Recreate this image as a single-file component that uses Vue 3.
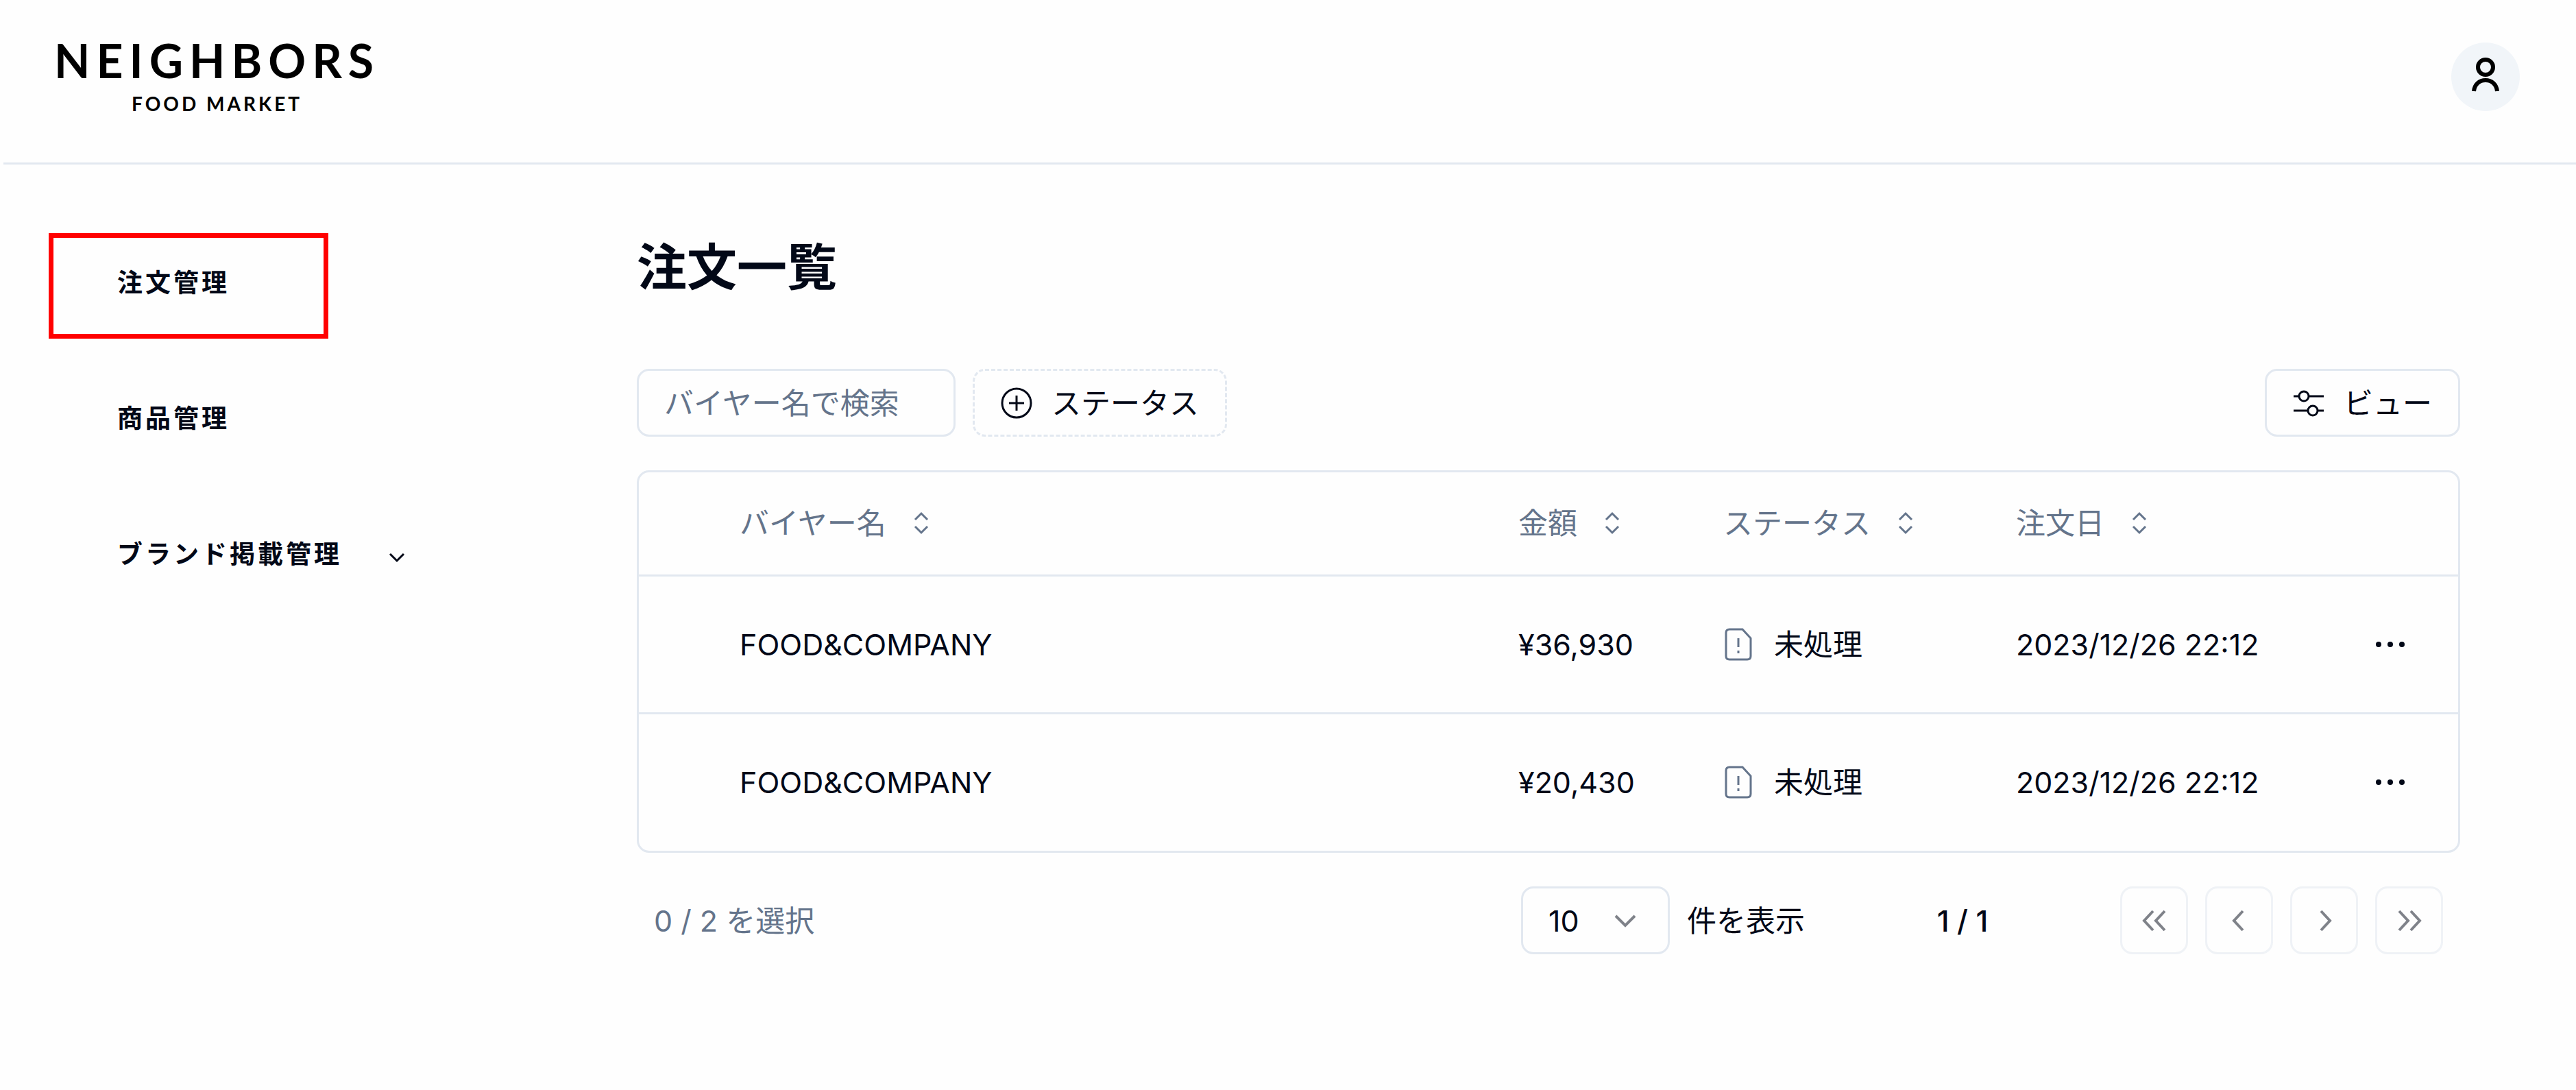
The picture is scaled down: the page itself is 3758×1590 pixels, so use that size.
<script setup>
import { ref } from 'vue'

const keyword = ref('')
const pageSize = ref('10')

const columns = [
  { key: 'buyer', label: 'バイヤー名' },
  { key: 'amount', label: '金額' },
  { key: 'status', label: 'ステータス' },
  { key: 'date', label: '注文日' }
]

const orders = [
  { id: 1, buyer: 'FOOD&COMPANY', amount: '¥36,930', status: '未処理', date: '2023/12/26 22:12' },
  { id: 2, buyer: 'FOOD&COMPANY', amount: '¥20,430', status: '未処理', date: '2023/12/26 22:12' }
]

const pagers = [
  { label: '最初のページ', d: 'M17 3L4 17L17 31M34 3L21 17L34 31' },
  { label: '前のページ', d: 'M24 3L11 17L24 31' },
  { label: '次のページ', d: 'M14 3L27 17L14 31' },
  { label: '最後のページ', d: 'M4 3L17 17L4 31M21 3L34 17L21 31' }
]
</script>

<template>
  <div class="page">
    <header class="header">
      <a class="logo" href="#">
        <span class="logo-name">NEIGHBORS</span>
        <span class="logo-sub">FOOD MARKET</span>
      </a>
      <button class="avatar" type="button" aria-label="アカウント">
        <svg width="100" height="100" viewBox="0 0 100 100" fill="none" stroke="#000" stroke-width="6">
          <circle cx="50" cy="36" r="11" />
          <path d="M33 71C34 61 41 55 50 55S66 61 67 71" />
        </svg>
      </button>
    </header>

    <div class="body">
      <nav class="sidebar">
        <a class="nav-item current" href="#">注文管理</a>
        <a class="nav-item" href="#">商品管理</a>
        <button class="nav-item" type="button">
          ブランド掲載管理
          <svg width="24" height="34" viewBox="0 0 24 34" fill="none" stroke="currentColor" stroke-width="3">
            <path d="M2 16L12 26L22 16" />
          </svg>
        </button>
      </nav>

      <main class="main">
        <h1 class="title">注文一覧</h1>

        <div class="toolbar">
          <input v-model="keyword" class="search" type="text" placeholder="バイヤー名で検索" aria-label="バイヤー名で検索" />
          <button class="btn dashed" type="button">
            <svg width="46" height="46" viewBox="0 0 46 46" fill="none" stroke="currentColor" stroke-width="3">
              <circle cx="23" cy="23" r="21" />
              <path d="M23 12V34M12 23H34" />
            </svg>
            ステータス
          </button>
          <button class="btn view" type="button">
            <svg width="46" height="46" viewBox="0 0 46 46" fill="none" stroke="currentColor" stroke-width="3">
              <path d="M1 13H9M23 13H45M1 34H22M36 34H45" />
              <circle cx="16" cy="13" r="7" />
              <circle cx="29" cy="34" r="7" />
            </svg>
            ビュー
          </button>
        </div>

        <div class="table-box">
          <table class="orders">
            <colgroup>
              <col class="col-select" />
              <col />
              <col class="col-amount" />
              <col class="col-status" />
              <col class="col-date" />
              <col class="col-actions" />
            </colgroup>
            <thead>
              <tr>
                <th></th>
                <th v-for="column in columns" :key="column.key" scope="col">
                  <button class="sort" type="button">
                    {{ column.label }}
                    <svg width="22" height="34" viewBox="0 0 22 34" fill="none" stroke="currentColor" stroke-width="3">
                      <path d="M2 12L11 3L20 12M2 22L11 31L20 22" />
                    </svg>
                  </button>
                </th>
                <th></th>
              </tr>
            </thead>
            <tbody>
              <tr v-for="order in orders" :key="order.id">
                <td></td>
                <td>{{ order.buyer }}</td>
                <td>{{ order.amount }}</td>
                <td>
                  <span class="status">
                    <svg width="42" height="48" viewBox="-2 0 42 48" fill="none" stroke="currentColor" stroke-width="3">
                      <path d="M7 2H26L38 15V41Q38 46 33 46H7Q2 46 2 41V7Q2 2 7 2Z" />
                      <path d="M20 15V28M20 33V37" />
                    </svg>
                    {{ order.status }}
                  </span>
                </td>
                <td>{{ order.date }}</td>
                <td>
                  <button class="more" type="button" aria-label="メニューを開く">
                    <svg width="46" height="12" viewBox="0 0 46 12" fill="currentColor">
                      <circle cx="6" cy="6" r="4" />
                      <circle cx="23" cy="6" r="4" />
                      <circle cx="40" cy="6" r="4" />
                    </svg>
                  </button>
                </td>
              </tr>
            </tbody>
          </table>
        </div>

        <div class="footer">
          <p class="selected">0 / 2 を選択</p>
          <div class="size">
            <span class="select-wrap">
              <select id="page-size" v-model="pageSize" class="select">
                <option>10</option>
                <option>20</option>
                <option>50</option>
              </select>
              <svg class="select-arrow" width="34" height="20" viewBox="0 0 34 20" fill="none" stroke="currentColor" stroke-width="4">
                <path d="M3 3L17 17L31 3" />
              </svg>
            </span>
            <label for="page-size">件を表示</label>
          </div>
          <p class="count">1 / 1</p>
          <div class="pager">
            <button v-for="pager in pagers" :key="pager.label" class="pager-btn" type="button" disabled :aria-label="pager.label">
              <svg width="38" height="34" viewBox="0 0 38 34" fill="none" stroke="currentColor" stroke-width="4">
                <path :d="pager.d" />
              </svg>
            </button>
          </div>
        </div>
      </main>
    </div>
  </div>
</template>

<style>
body {
  margin: 0;
  background: #fefefe;
}
</style>

<style scoped>
.page {
  color: #020817;
  font-family: Inter, "Noto Sans CJK JP", sans-serif;
  font-size: 43px;
  line-height: 60px;
}

.page *,
.page *::after {
  box-sizing: border-box;
}

button,
input,
select {
  margin: 0;
  padding: 0;
  border: 0;
  background: none;
  color: inherit;
  font: inherit;
}

svg {
  display: block;
  flex: none;
}

.header {
  display: flex;
  align-items: flex-start;
  justify-content: space-between;
  height: 240px;
  margin-left: 5px;
  padding: 48px 82px 0 74px;
  border-bottom: 3px solid #e2e8f0;
}

.logo {
  display: flex;
  flex-direction: column;
  align-items: center;
  color: #000;
  font-family: Lato, sans-serif;
  font-weight: 700;
  text-decoration: none;
}

.logo-name {
  font-size: 68px;
  line-height: 80px;
  letter-spacing: 9px;
}

.logo-sub {
  font-size: 28px;
  line-height: 46px;
  letter-spacing: 4px;
}

.avatar {
  width: 100px;
  height: 100px;
  margin-top: 14px;
  border-radius: 50%;
  background: #f1f5f9;
}

.body {
  display: flex;
}

.sidebar {
  display: flex;
  flex: none;
  flex-direction: column;
  width: 929px;
  padding: 74px 0 0 171px;
}

.nav-item {
  position: relative;
  display: flex;
  align-items: center;
  gap: 68px;
  height: 198px;
  color: #020817;
  font-size: 37px;
  font-weight: 700;
  letter-spacing: 4px;
  text-decoration: none;
}

.current::after {
  content: "";
  position: absolute;
  top: 26px;
  left: -100px;
  width: 408px;
  height: 154px;
  border: 7px solid #f00;
}

.main {
  flex: 1;
  min-width: 0;
  padding: 100px 169px 100px 0;
}

.title {
  margin: 0 0 98px;
  font-size: 73px;
  font-weight: 700;
  line-height: 100px;
}

.toolbar {
  display: flex;
  gap: 25px;
  margin-bottom: 49px;
}

.search {
  width: 465px;
  height: 99px;
  padding: 0 37px;
  border: 3px solid #e2e8f0;
  border-radius: 18px;
}

.search::placeholder {
  color: #64748b;
  opacity: 1;
}

.btn {
  display: flex;
  align-items: center;
  gap: 28px;
  height: 99px;
  padding: 0 38px;
  border: 3px solid #e2e8f0;
  border-radius: 18px;
}

.dashed {
  border-style: dashed;
}

.view {
  margin-left: auto;
}

.table-box {
  border: 3px solid #e2e8f0;
  border-radius: 18px;
}

.orders {
  width: 100%;
  border-collapse: collapse;
  table-layout: fixed;
}

.col-select {
  width: 122px;
}

.col-amount {
  width: 299px;
}

.col-status {
  width: 427px;
}

.col-date {
  width: 496px;
}

.col-actions {
  width: 174px;
}

th,
td {
  padding: 0 25px;
  text-align: left;
  vertical-align: middle;
}

th {
  height: 150px;
  color: #64748b;
  font-weight: 400;
}

td {
  height: 201px;
}

tbody tr {
  border-top: 3px solid #e2e8f0;
}

.sort {
  display: flex;
  align-items: center;
  gap: 40px;
}

.status {
  display: flex;
  align-items: center;
  gap: 32px;
}

.status svg {
  color: #64748b;
}

.more {
  display: flex;
  align-items: center;
  justify-content: center;
  width: 100px;
  height: 100px;
}

.footer {
  display: flex;
  align-items: center;
  margin-top: 49px;
  padding: 0 25px;
}

.footer p {
  margin: 0;
}

.selected {
  flex: 1;
  color: #64748b;
}

.size {
  display: flex;
  align-items: center;
  gap: 25px;
}

.select-wrap {
  position: relative;
}

.select {
  display: block;
  width: 217px;
  height: 99px;
  padding: 0 37px;
  border: 3px solid #e2e8f0;
  border-radius: 18px;
  appearance: none;
}

.select-arrow {
  position: absolute;
  top: 40px;
  right: 48px;
  opacity: 0.5;
  pointer-events: none;
}

.count {
  width: 310px;
  font-weight: 500;
  text-align: center;
}

.footer .count {
  margin: 0 75px;
}

.pager {
  display: flex;
  gap: 25px;
}

.pager-btn {
  display: flex;
  align-items: center;
  justify-content: center;
  width: 99px;
  height: 99px;
  border: 3px solid #e2e8f0;
  border-radius: 18px;
  opacity: 0.5;
}
</style>
